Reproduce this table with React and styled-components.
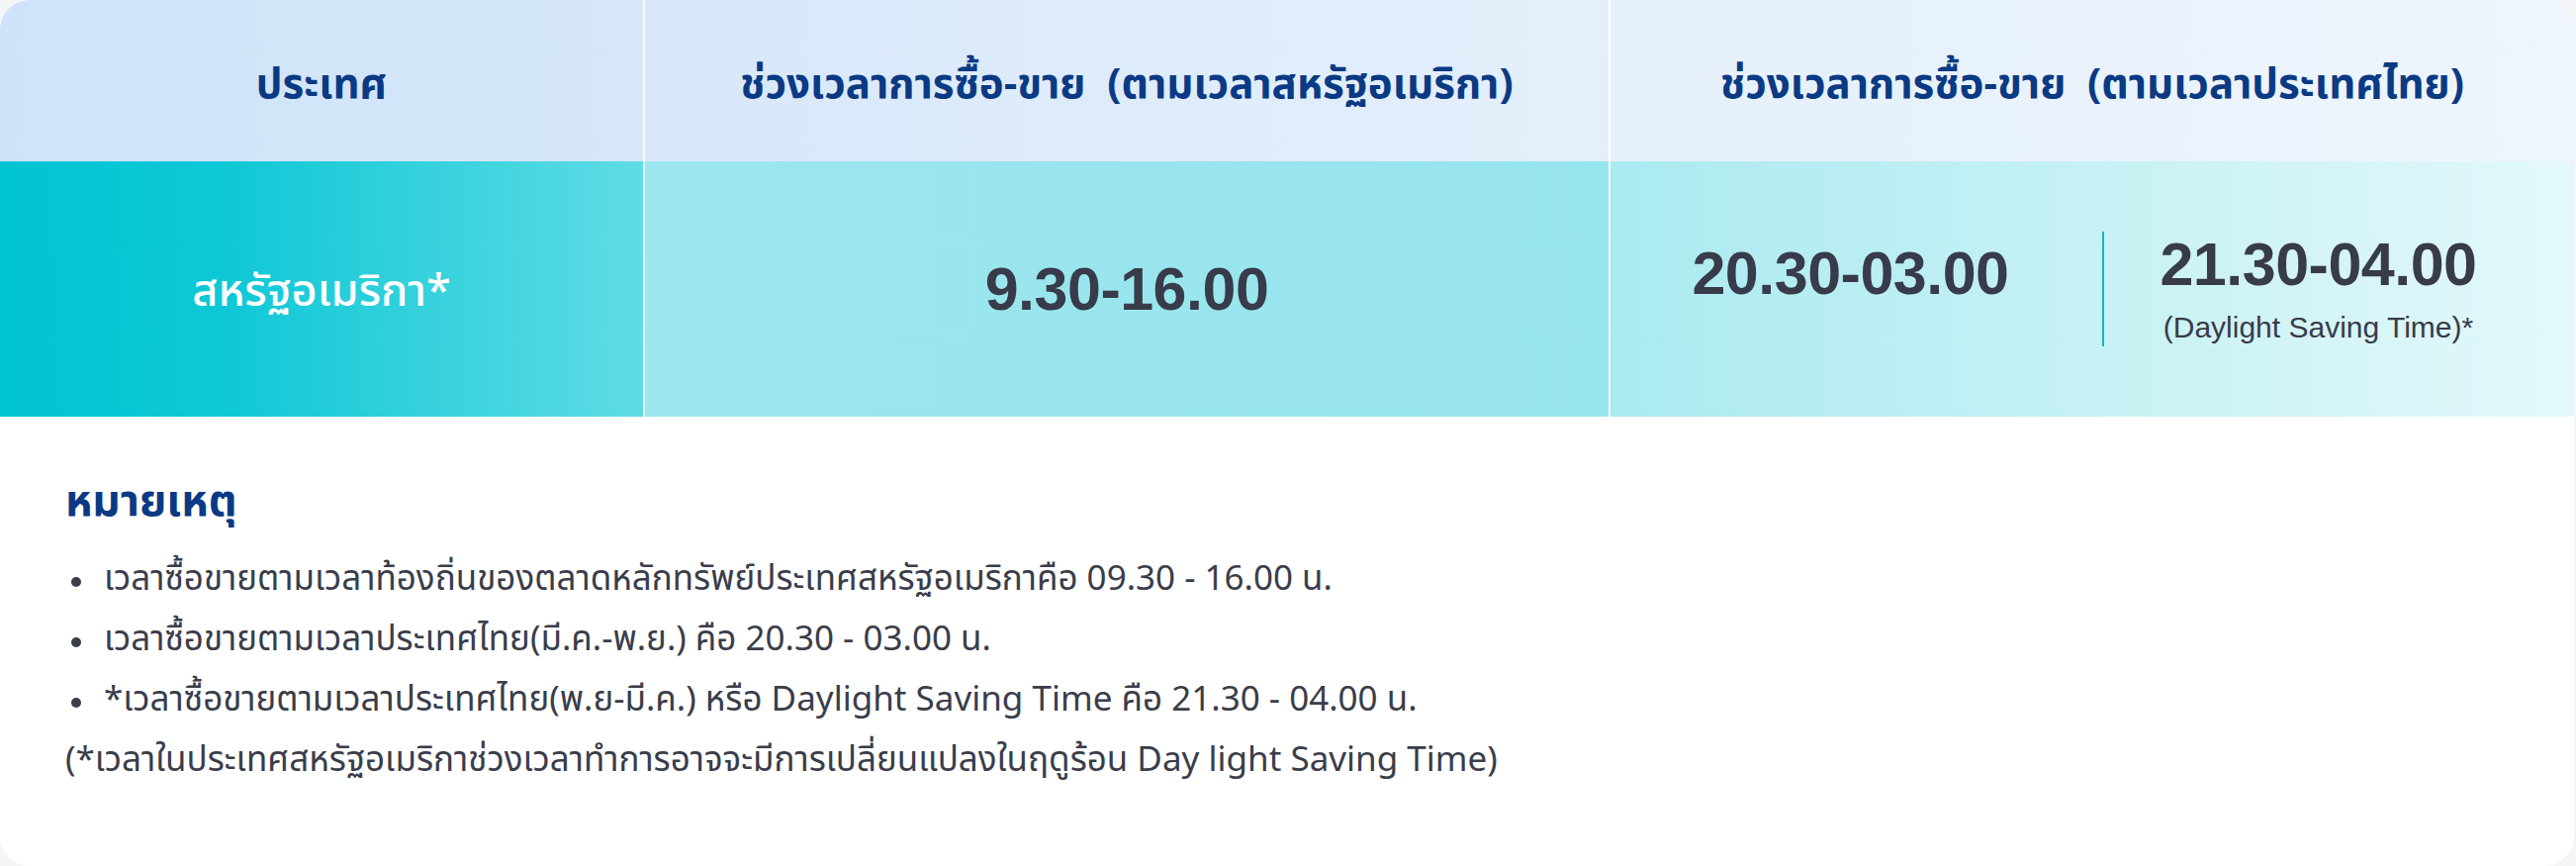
import React from "react";
import styled, { createGlobalStyle } from "styled-components";

const GlobalStyle = createGlobalStyle`
  html, body {
    margin: 0;
    padding: 0;
    background: #f4f5f7;
  }
  * {
    box-sizing: border-box;
  }
`;

const FONT = `"Noto Sans Thai", "Noto Sans Thai UI", "Loma", "Garuda", "Tlwg Typo", "Noto Sans", "Liberation Sans", sans-serif`;

const Card = styled.div`
  width: 2602px;
  height: 875px;
  background: #ffffff;
  border-radius: 30px;
  overflow: hidden;
  font-family: ${FONT};
  display: flex;
  flex-direction: column;
`;

const Table = styled.div`
  display: grid;
  grid-template-columns: 650px 976px 1fr;
  grid-template-rows: 163px 258px;
`;

const HeadCell = styled.div`
  display: flex;
  align-items: center;
  justify-content: center;
  padding-top: 8px;
  color: #0b3a84;
  font-size: 42px;
  font-weight: 700;
  background: ${(p) => p.bg};
  border-left: ${(p) => (p.first ? "none" : "2px solid rgba(255,255,255,0.7)")};
`;

const BodyCell = styled.div`
  display: flex;
  align-items: center;
  justify-content: center;
  background: ${(p) => p.bg};
  border-left: ${(p) => (p.first ? "none" : "2px solid rgba(255,255,255,0.7)")};
`;

const Country = styled.span`
  color: #ffffff;
  font-size: 45px;
  font-weight: 500;
  padding-top: 6px;
`;

const Time = styled.div`
  color: #383b49;
  font-family: "Liberation Sans", Arial, sans-serif;
  font-size: 61px;
  font-weight: 700;
  letter-spacing: -0.5px;
  line-height: 1;
`;

const Split = styled.div`
  display: flex;
  width: 100%;
  align-items: center;
`;

const SplitSide = styled.div`
  flex: ${(p) => (p.top ? "0 0 497px" : "1")};
  display: flex;
  flex-direction: column;
  align-items: center;
  align-self: ${(p) => (p.top ? "flex-start" : "center")};
  padding-top: ${(p) => (p.top ? "12px" : "0")};
  padding-right: ${(p) => (p.top ? "12px" : "42px")};
`;

const Divider = styled.div`
  width: 2px;
  height: 116px;
  background: #1fb3b3;
`;

const SubNote = styled.div`
  color: #383b49;
  font-family: "Liberation Sans", Arial, sans-serif;
  font-size: 30px;
  margin-top: 16px;
`;

const Notes = styled.div`
  padding: 60px 66px 0;
  color: #3a3d4a;
`;

const NotesTitle = styled.div`
  color: #0b3a84;
  font-size: 44px;
  font-weight: 700;
  line-height: 54px;
  margin-bottom: 20px;
`;

const List = styled.ul`
  margin: 0;
  padding: 0;
  list-style: none;
`;

const Item = styled.li`
  position: relative;
  padding-left: 39px;
  font-size: 35px;
  line-height: 61px;

  &::before {
    content: "";
    position: absolute;
    left: 6px;
    top: 28px;
    width: 10px;
    height: 10px;
    border-radius: 50%;
    background: #3a3d4a;
  }
`;

const Footnote = styled.div`
  font-size: 35px;
  line-height: 61px;
`;

const notes = [
  "เวลาซื้อขายตามเวลาท้องถิ่นของตลาดหลักทรัพย์ประเทศสหรัฐอเมริกาคือ 09.30 - 16.00 น.",
  "เวลาซื้อขายตามเวลาประเทศไทย(มี.ค.-พ.ย.) คือ 20.30 - 03.00 น.",
  "*เวลาซื้อขายตามเวลาประเทศไทย(พ.ย-มี.ค.) หรือ Daylight Saving Time คือ 21.30 - 04.00 น.",
];

export default function App() {
  return (
    <>
      <GlobalStyle />
      <Card>
        <Table>
          <HeadCell first bg="linear-gradient(90deg, #cee3f9, #d6e7f9)">
            ประเทศ
          </HeadCell>
          <HeadCell bg="linear-gradient(90deg, #d8e8f9, #e4effb)">
            ช่วงเวลาการซื้อ-ขาย&nbsp; (ตามเวลาสหรัฐอเมริกา)
          </HeadCell>
          <HeadCell bg="linear-gradient(90deg, #e5f0fb, #eef5fc)">
            ช่วงเวลาการซื้อ-ขาย&nbsp; (ตามเวลาประเทศไทย)
          </HeadCell>

          <BodyCell first bg="linear-gradient(90deg, #00c3d3 0%, #0fc8d6 35%, #5fdce5 100%)">
            <Country>สหรัฐอเมริกา*</Country>
          </BodyCell>
          <BodyCell bg="linear-gradient(90deg, #9ce6ee, #97e5ed)">
            <Time>9.30-16.00</Time>
          </BodyCell>
          <BodyCell bg="linear-gradient(90deg, #aaeaf1, #c9f2f5 55%, #e4f8fa)">
            <Split>
              <SplitSide top>
                <Time>20.30-03.00</Time>
              </SplitSide>
              <Divider />
              <SplitSide>
                <Time>21.30-04.00</Time>
                <SubNote>(Daylight Saving Time)*</SubNote>
              </SplitSide>
            </Split>
          </BodyCell>
        </Table>

        <Notes>
          <NotesTitle>หมายเหตุ</NotesTitle>
          <List>
            {notes.map((n) => (
              <Item key={n}>{n}</Item>
            ))}
          </List>
          <Footnote>
            (*เวลาในประเทศสหรัฐอเมริกาช่วงเวลาทำการอาจจะมีการเปลี่ยนแปลงในฤดูร้อน Day light Saving Time)
          </Footnote>
        </Notes>
      </Card>
    </>
  );
}
